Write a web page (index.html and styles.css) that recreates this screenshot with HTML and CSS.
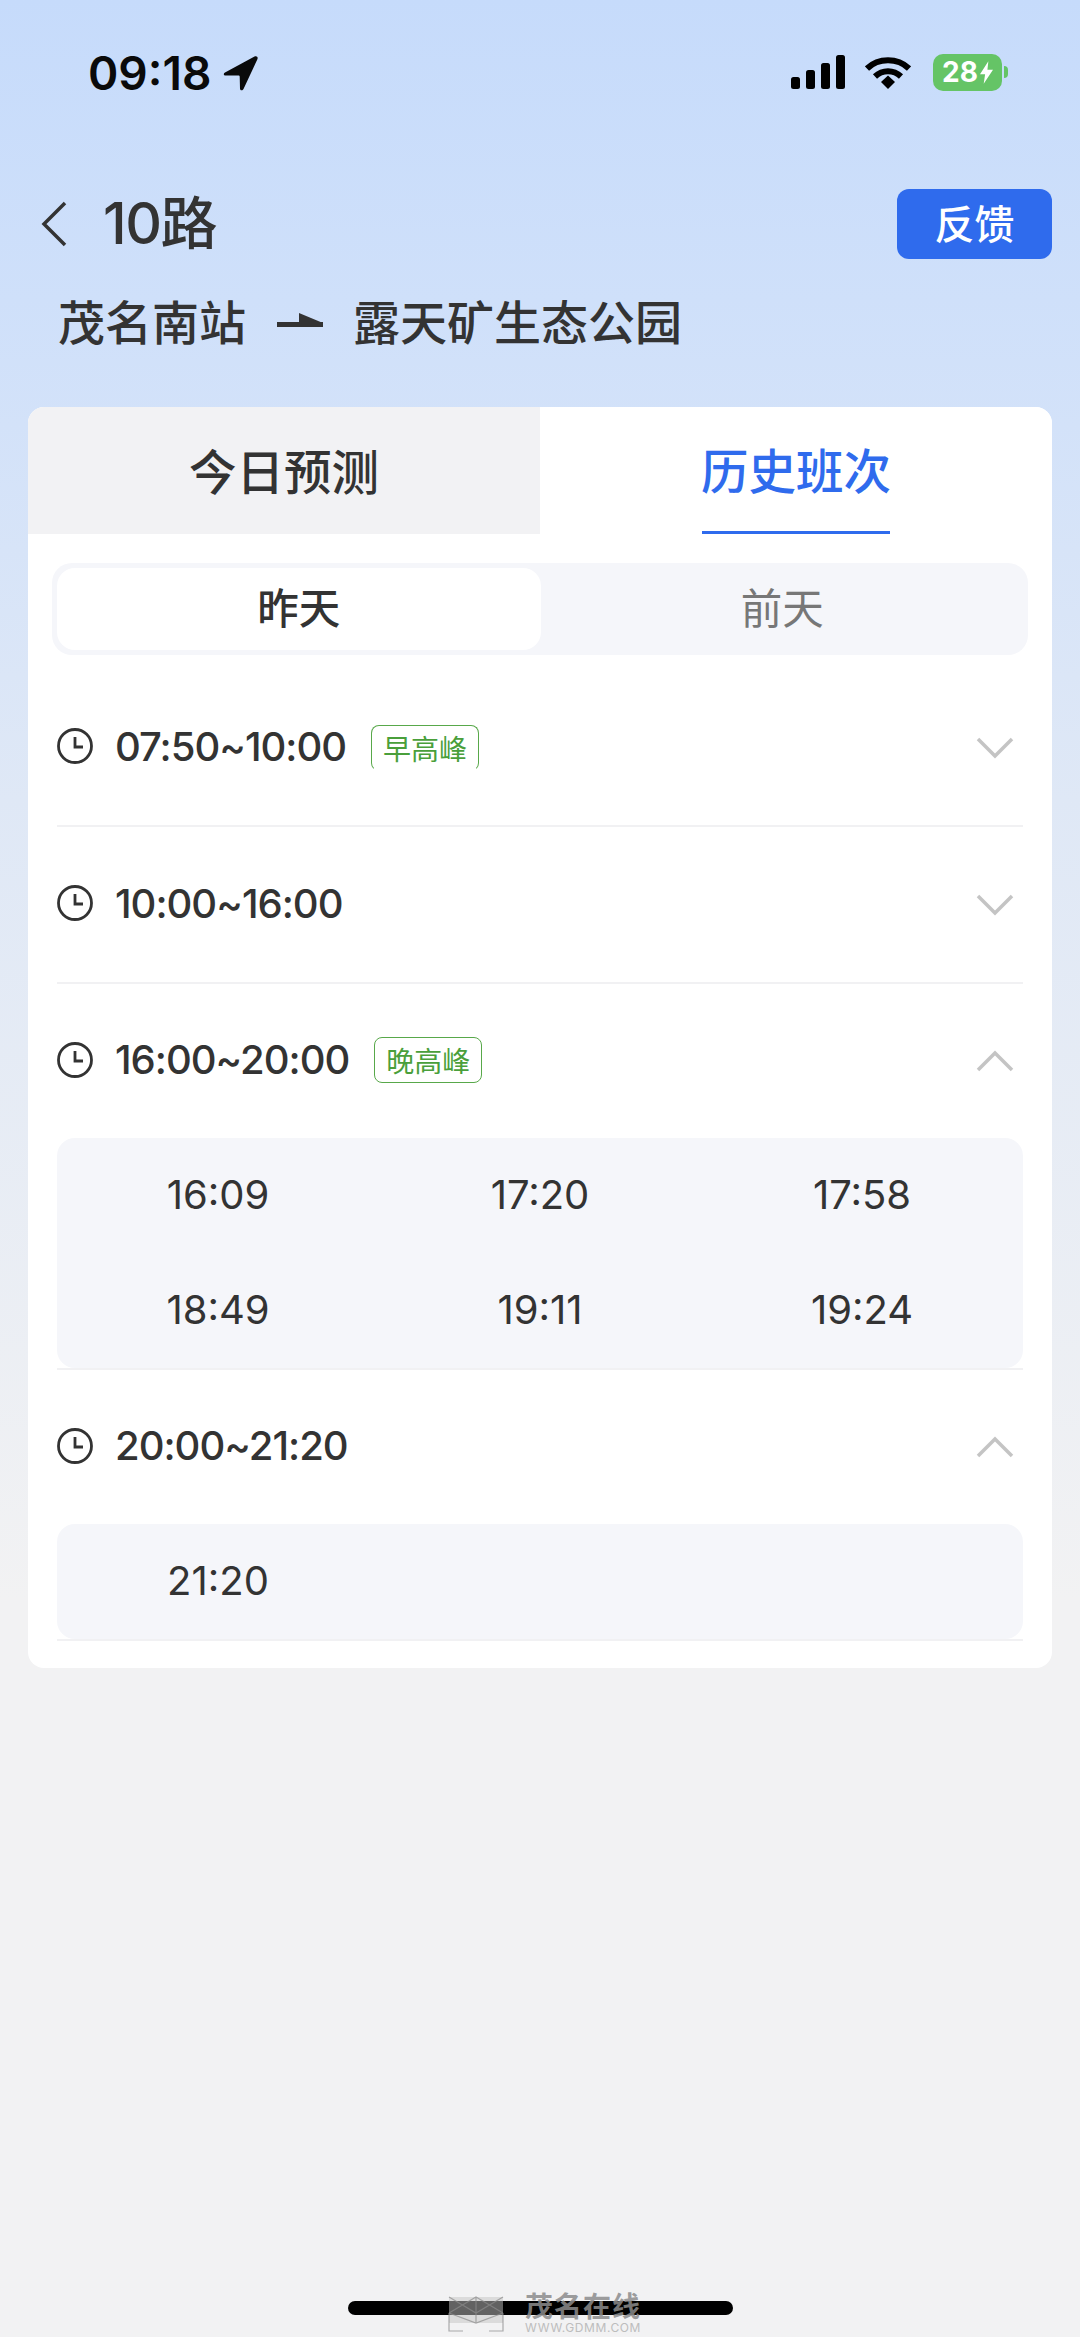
FILE: index.html
```html
<!DOCTYPE html>
<html lang="zh-CN">
<head>
<meta charset="utf-8">
<title>10路</title>
<link rel="stylesheet" href="styles.css">
</head>
<body>
<div class="page">
  <div class="status">
    <div class="status-left">
      <span class="clock-time">09:18</span>
      <svg class="loc" viewBox="0 0 36 36"><path d="M2 17.500 31.500 1.500c2.200-1 3.800.6 2.900 2.700L20.500 34c-1 2-3.400 1.600-3.500-.6l-.3-11.700c0-.9-.5-1.300-1.300-1.300L2.800 20.600c-2.200 0-2.800-2-.8-3.100Z"/></svg>
    </div>
    <div class="status-right">
      <svg class="signal" viewBox="0 0 54 34"><rect x="0" y="22" width="9" height="12" rx="2.500"/><rect x="15" y="15" width="9" height="19" rx="2.500"/><rect x="30" y="8" width="9" height="26" rx="2.500"/><rect x="45" y="0" width="9" height="34" rx="2.500"/></svg>
      <svg class="wifi" viewBox="0 0 46 34"><path d="M2 13.500C13.500 2.500 32.500 2.500 44 13.500" fill="none" stroke="#000" stroke-width="6"/><path d="M10 21.500C17.500 14.500 28.500 14.500 36 21.500" fill="none" stroke="#000" stroke-width="6"/><path d="M16 27 23 20.500 30 27 23 34Z" fill="#000"/></svg>
      <div class="battery"><span class="battery-num">28</span><svg class="bolt" viewBox="0 0 14 24"><path d="M9 0 0 14h5.500L4 24l10-15H8Z"/></svg></div>
      <span class="nub"></span>
    </div>
  </div>

  <div class="title-row">
    <div class="title-left">
      <svg class="back" viewBox="0 0 28 46"><path d="M25 2 4 23l21 21" fill="none" stroke="#333" stroke-width="3.500"/></svg>
      <span class="title">10路</span>
    </div>
    <button class="feedback">反馈</button>
  </div>

  <div class="route">
    <span>茂名南站</span>
    <svg class="route-arrow" viewBox="0 0 46 14"><path d="M0 9h46v5H0Z M22 10V0l24 10Z" fill="#333"/></svg>
    <span>露天矿生态公园</span>
  </div>

  <div class="card">
    <div class="tabs">
      <div class="tab tab-off">今日预测</div>
      <div class="tab tab-on"><span class="tab-label">历史班次</span></div>
    </div>
    <div class="seg">
      <div class="seg-item seg-on">昨天</div>
      <div class="seg-item seg-off">前天</div>
    </div>

    <div class="list">
      <div class="group">
        <div class="row">
          <svg class="clock" viewBox="0 0 36 36"><circle cx="18" cy="18" r="16.500" fill="none" stroke="#333" stroke-width="2.800"/><path d="M18 9v10h8" fill="none" stroke="#333" stroke-width="2.800"/></svg>
          <span class="range">07:50~10:00</span>
          <span class="tag tag-cut">早高峰</span>
          <svg class="chev" viewBox="0 0 38 24"><path d="M2 3 19 20 36 3" fill="none" stroke="#c4c4c4" stroke-width="3.500"/></svg>
        </div>
      </div>
      <div class="group">
        <div class="row">
          <svg class="clock" viewBox="0 0 36 36"><circle cx="18" cy="18" r="16.500" fill="none" stroke="#333" stroke-width="2.800"/><path d="M18 9v10h8" fill="none" stroke="#333" stroke-width="2.800"/></svg>
          <span class="range">10:00~16:00</span>
          <svg class="chev" viewBox="0 0 38 24"><path d="M2 3 19 20 36 3" fill="none" stroke="#c4c4c4" stroke-width="3.500"/></svg>
        </div>
      </div>
      <div class="group">
        <div class="row row-open">
          <svg class="clock" viewBox="0 0 36 36"><circle cx="18" cy="18" r="16.500" fill="none" stroke="#333" stroke-width="2.800"/><path d="M18 9v10h8" fill="none" stroke="#333" stroke-width="2.800"/></svg>
          <span class="range">16:00~20:00</span>
          <span class="tag">晚高峰</span>
          <svg class="chev" viewBox="0 0 38 24"><path d="M2 21 19 4 36 21" fill="none" stroke="#c4c4c4" stroke-width="3.500"/></svg>
        </div>
        <div class="times">
          <span>16:09</span><span>17:20</span><span>17:58</span>
          <span>18:49</span><span>19:11</span><span>19:24</span>
        </div>
      </div>
      <div class="group">
        <div class="row row-open">
          <svg class="clock" viewBox="0 0 36 36"><circle cx="18" cy="18" r="16.500" fill="none" stroke="#333" stroke-width="2.800"/><path d="M18 9v10h8" fill="none" stroke="#333" stroke-width="2.800"/></svg>
          <span class="range">20:00~21:20</span>
          <svg class="chev" viewBox="0 0 38 24"><path d="M2 21 19 4 36 21" fill="none" stroke="#c4c4c4" stroke-width="3.500"/></svg>
        </div>
        <div class="times">
          <span>21:20</span>
        </div>
      </div>
    </div>
  </div>

  <div class="home-area">
    <div class="home-bar"></div>
    <div class="mark">
      <svg class="mark-logo" viewBox="0 0 66 40"><path d="M6 4h54v26H6Z" fill="#c4c4c4" fill-opacity=".5"/><path d="M6 4 33 20 60 4M6 20 33 4 60 20M6 20v18h14M60 20v18H46M6 20l27 10 27-10M33 4v26" fill="none" stroke="#8c8c8c" stroke-opacity=".7" stroke-width="1.200"/></svg>
      <div class="mark-text">
        <span class="mark-cn">茂名在线</span>
        <span class="mark-en">WWW.GDMM.COM</span>
      </div>
    </div>
  </div>
</div>
</body>
</html>
```

FILE: styles.css
```css
* { box-sizing: border-box; }
html, body { margin: 0; padding: 0; }
body {
  font-family: Inter, "Noto Sans CJK SC", sans-serif;
  color: #333;
}
.page {
  width: 1080px;
  height: 2337px;
  display: flex;
  flex-direction: column;
  overflow: hidden;
  background: linear-gradient(180deg, #c6dbfb 0, #cfe0fa 300px, #dfe8f6 800px, #f2f2f3 1600px);
}

/* status bar */
.status {
  height: 145px;
  padding: 52px 72px 0 88px;
  display: flex;
  justify-content: space-between;
  align-items: flex-start;
}
.status-left { display: flex; align-items: center; gap: 12px; height: 42px; }
.clock-time { font-size: 46px; font-weight: 600; color: #0a0a0a; line-height: 42px; }
.loc { width: 36px; height: 36px; fill: #0a0a0a; }
.status-right { display: flex; align-items: center; height: 40px; }
.signal { width: 54px; height: 34px; fill: #000; }
.wifi { width: 46px; height: 34px; margin-left: 20px; }
.battery {
  width: 69px; height: 37px; margin-left: 22px;
  background: #65c466; border-radius: 10px;
  display: flex; align-items: center; justify-content: center; gap: 2px;
}
.battery-num { font-size: 28px; font-weight: 700; color: #fff; line-height: 1; }
.bolt { width: 13px; height: 23px; fill: #fff; }
.nub { width: 4px; height: 12px; margin-left: 2px; background: #65c466; border-radius: 0 4px 4px 0; }

/* title */
.title-row {
  height: 70px;
  margin-top: 44px;
  padding: 0 28px 0 40px;
  display: flex;
  justify-content: space-between;
  align-items: center;
}
.title-left { display: flex; align-items: center; gap: 35px; }
.back { width: 28px; height: 46px; }
.title { font-size: 57px; font-weight: 500; letter-spacing: -1.500px; color: #333; line-height: 70px; }
.feedback {
  width: 155px; height: 70px;
  border: 0; border-radius: 12px;
  background: #2f6bed; color: #fff;
  font: 500 40px "Noto Sans CJK SC", sans-serif;
  padding: 0 0 4px;
}
.route {
  margin-top: 27px;
  height: 66px;
  padding-left: 58px;
  display: flex;
  align-items: center;
  font-size: 47px;
  font-weight: 500;
  color: #333;
}
.route-arrow { width: 46px; height: 14px; margin: 2px 30px 0 31px; }

/* card */
.card {
  margin: 55px 28px 0;
  height: 1261px;
  background: #fff;
  border-radius: 16px;
  overflow: hidden;
  flex: none;
}
.tabs { display: flex; height: 127px; }
.tab { flex: 1; display: flex; align-items: center; justify-content: center; font-size: 47.500px; font-weight: 500; padding-bottom: 2px; }
.tab-off { background: #f2f2f4; color: #333; }
.tab-on { background: #fff; color: #2f6bed; border-radius: 16px 16px 0 0; align-items: stretch; padding-bottom: 0; }
.tab-label { display: flex; align-items: center; width: 188px; justify-content: center; border-bottom: 3px solid #2f6bed; padding-bottom: 2px; white-space: nowrap; }

.seg {
  margin: 29px 24px 0;
  height: 92px;
  padding: 5px;
  padding-right: 0;
  background: #f5f6fa;
  border-radius: 20px;
  display: flex;
}
.seg-item { flex: 1; display: flex; align-items: center; justify-content: center; font-size: 41.500px; padding-bottom: 6px; }
.seg-on { background: #fff; color: #333; border-radius: 18px; font-weight: 500; }
.seg-off { color: #777; padding-right: 4px; }

/* list */
.list { margin: 15px 29px 0; }
.group { border-bottom: 2px solid #f1f1f3; }
.row {
  height: 155px;
  padding-bottom: 3px;
  display: flex;
  align-items: center;
}
.row-open { height: 154px; padding-bottom: 3px; }
.clock { width: 36px; height: 36px; flex: none; }
.range { font-size: 40px; font-weight: 500; letter-spacing: -1px; margin-left: 22px; color: #333; }
.tag {
  margin-left: 25px;
  width: 108px; height: 46px;
  border: 1.500px solid #58a84a;
  border-radius: 8px;
  color: #4a9f3b;
  font-size: 28px;
  display: flex; align-items: center; justify-content: center;
}
.tag-cut { border-bottom-color: transparent; margin-top: 3px; }
.chev { width: 38px; height: 24px; margin: 3px 9px 0 auto; }

.times {
  background: #f5f6fa;
  border-radius: 18px;
  display: grid;
  grid-template-columns: repeat(3, 1fr);
  grid-auto-rows: 115px;
  align-items: center;
  justify-items: center;
  font-size: 40px;
  font-weight: 400;
  color: #333;
}
.times span { padding-bottom: 3px; }

/* home indicator and watermark */
.home-area { margin-top: auto; height: 60px; position: relative; display: flex; justify-content: center; }
.home-bar { width: 385px; height: 14px; margin-top: 24px; background: #000; border-radius: 7px; }
.mark {
  position: absolute;
  left: 443px; top: 16px;
  display: flex; gap: 16px;
}
.mark-logo { width: 66px; height: 40px; }
.mark-text { display: flex; flex-direction: column; width: 116px; }
.mark-cn { font-size: 28px; line-height: 28px; letter-spacing: 1px; font-weight: 700; color: rgba(140,140,140,.85); white-space: nowrap; }
.mark-en { font-size: 12px; line-height: 13px; color: #bdbdbd; letter-spacing: .6px; white-space: nowrap; }
```
